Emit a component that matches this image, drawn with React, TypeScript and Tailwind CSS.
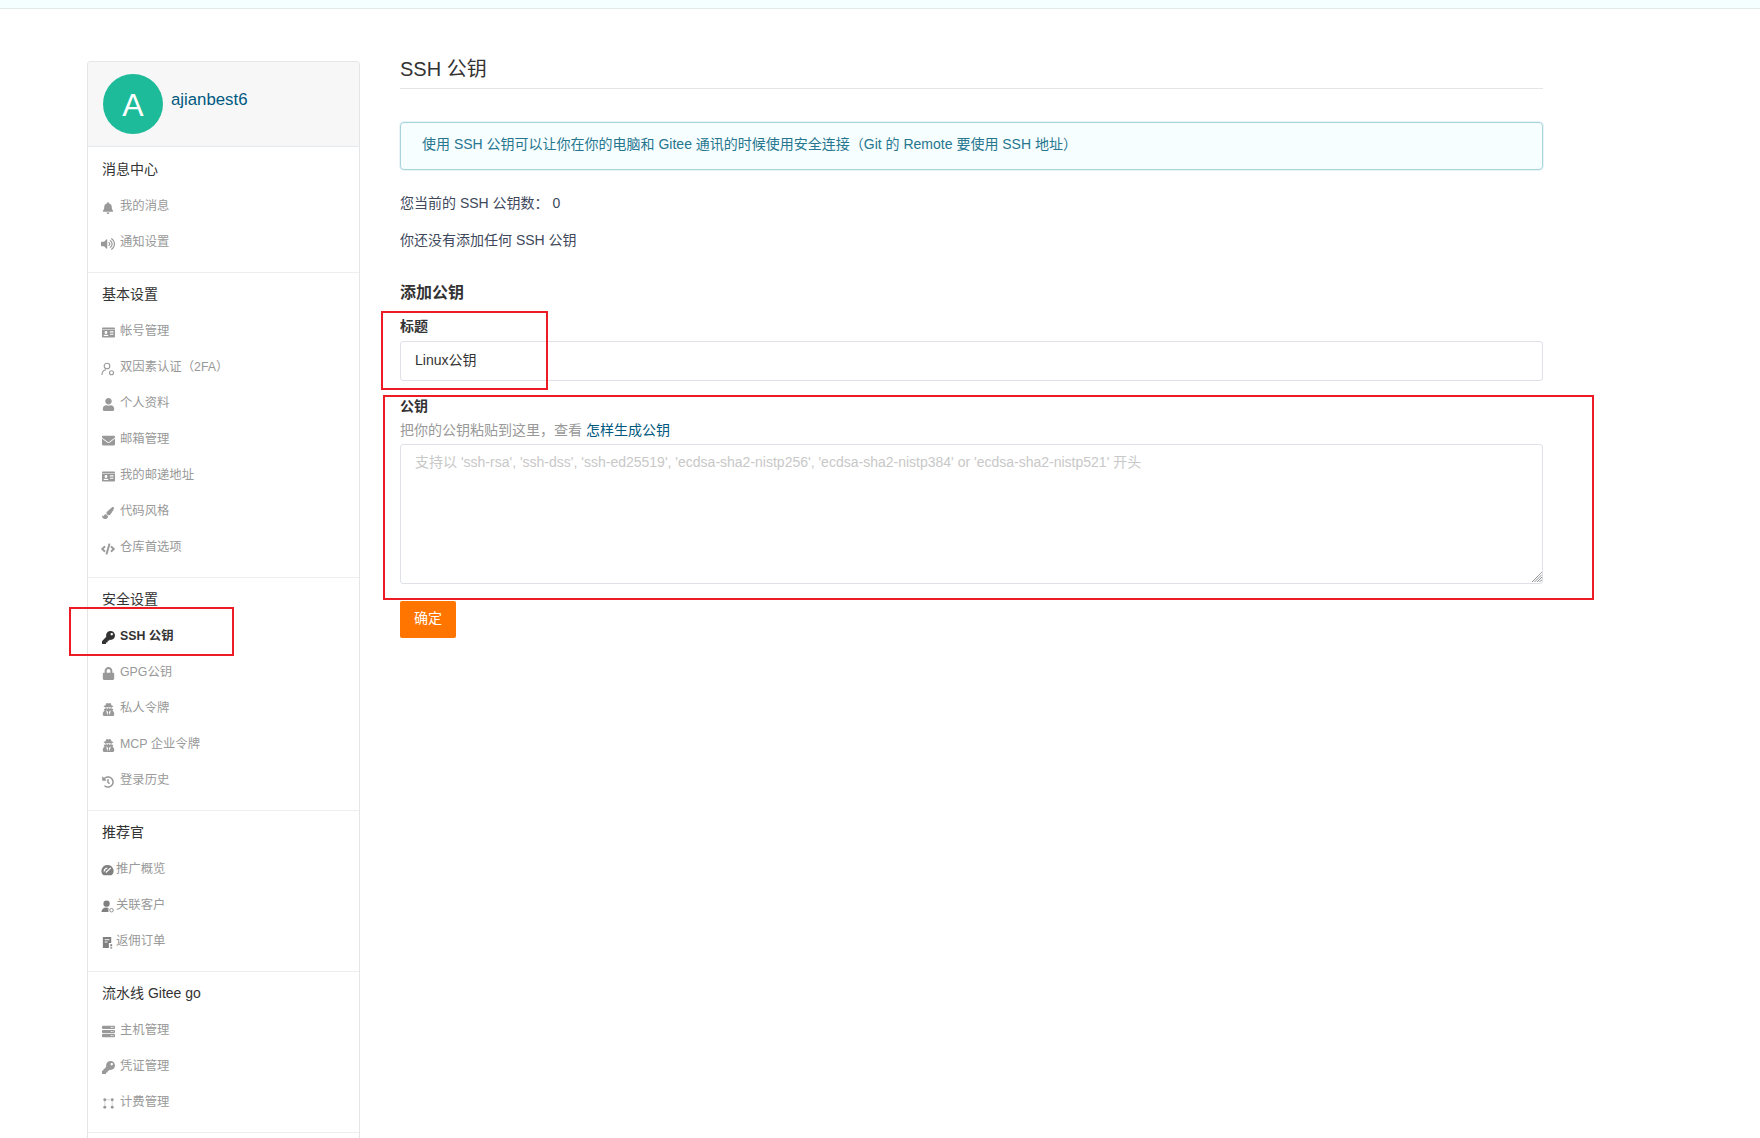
import type { ReactNode } from "react";
import {
  FaBell,
  FaCode,
  FaEnvelope,
  FaHistory,
  FaIdCard,
  FaKey,
  FaLock,
  FaPaintBrush,
  FaServer,
  FaUser,
  FaUserSecret,
  FaVolumeUp,
} from "react-icons/fa";

const font = "font-['Liberation_Sans','Noto_Sans_CJK_SC',sans-serif]";

function TwoFactor() {
  return (
    <svg viewBox="0 0 14 14" className="h-[14px] w-[14px]" fill="none" stroke="currentColor" strokeWidth="1.1">
      <circle cx="6" cy="4" r="2.8" />
      <path d="M1 13c0-3 1.6-5 4-5.3" />
      <circle cx="10.5" cy="10.8" r="2" />
    </svg>
  );
}

function Gauge() {
  return (
    <svg viewBox="0 0 14 14" className="h-[13px] w-[13px]" fill="currentColor">
      <path d="M7 1a6.5 6.5 0 0 0-5 10.7c.3.3.6.5 1 .5h8c.4 0 .7-.2 1-.5A6.5 6.5 0 0 0 7 1z" />
      <path d="M5.2 9.2L10.5 4.2M3.4 8a3.8 3.8 0 0 1 3.4-3.6" stroke="#fff" strokeWidth="1.3" fill="none" />
    </svg>
  );
}

function LinkedUser() {
  return (
    <svg viewBox="0 0 14 14" className="h-[13px] w-[13px]" fill="currentColor">
      <circle cx="6" cy="4" r="3.4" />
      <path d="M0.5 13c0-3.2 2.2-5 5-5 1 0 1.8.2 2.5.6V13z" />
      <circle cx="11.3" cy="11" r="1.9" fill="none" stroke="currentColor" strokeWidth="0.9" />
    </svg>
  );
}

function Receipt() {
  return (
    <svg viewBox="0 0 14 14" className="h-[13px] w-[13px]" fill="currentColor">
      <path d="M2 1h9v6.5H8.5V13H2z" />
      <path d="M4 4h5M4 6.5h3" stroke="#fff" strokeWidth="1" />
      <path d="M10 9h2v2h-2zM10 12h2v1.5h-2z" />
    </svg>
  );
}

function Billing() {
  return (
    <svg viewBox="0 0 14 14" className="h-[13px] w-[13px]" fill="currentColor">
      <circle cx="3" cy="3" r="1.6" />
      <circle cx="11" cy="3" r="1.6" />
      <circle cx="3" cy="11" r="1.6" />
      <circle cx="11" cy="11" r="1.6" />
      <path d="M3 4v6M11 4v6M5 3h4" stroke="currentColor" strokeWidth="0.8" strokeDasharray="1 1" />
    </svg>
  );
}

function ResizeGrip() {
  return (
    <svg viewBox="0 0 10 10" className="absolute bottom-[2px] right-[1px] h-[10px] w-[10px]" stroke="#666" strokeWidth="1" strokeDasharray="1 0.5">
      <path d="M0 10L10 0M2.5 10L10 2.5M5 10L10 5M7.5 10L10 7.5" />
    </svg>
  );
}

type Item = { icon: ReactNode; label: string; active?: boolean; tight?: boolean };
type Section = { title: string; items: Item[] };

const sections: Section[] = [
  {
    title: "消息中心",
    items: [
      { icon: <FaBell size={12} />, label: "我的消息" },
      { icon: <FaVolumeUp size={14} />, label: "通知设置" },
    ],
  },
  {
    title: "基本设置",
    items: [
      { icon: <FaIdCard size={13} />, label: "帐号管理" },
      { icon: <TwoFactor />, label: "双因素认证（2FA）" },
      { icon: <FaUser size={13} />, label: "个人资料" },
      { icon: <FaEnvelope size={13} />, label: "邮箱管理" },
      { icon: <FaIdCard size={13} />, label: "我的邮递地址" },
      { icon: <FaPaintBrush size={12} />, label: "代码风格" },
      { icon: <FaCode size={14} />, label: "仓库首选项" },
    ],
  },
  {
    title: "安全设置",
    items: [
      { icon: <FaKey size={13} />, label: "SSH 公钥", active: true },
      { icon: <FaLock size={13} />, label: "GPG公钥" },
      { icon: <FaUserSecret size={13} />, label: "私人令牌" },
      { icon: <FaUserSecret size={13} />, label: "MCP 企业令牌" },
      { icon: <FaHistory size={12} />, label: "登录历史" },
    ],
  },
  {
    title: "推荐官",
    items: [
      { icon: <Gauge />, label: "推广概览", tight: true },
      { icon: <LinkedUser />, label: "关联客户", tight: true },
      { icon: <Receipt />, label: "返佣订单", tight: true },
    ],
  },
  {
    title: "流水线 Gitee go",
    items: [
      { icon: <FaServer size={13} />, label: "主机管理" },
      { icon: <FaKey size={13} />, label: "凭证管理" },
      { icon: <Billing />, label: "计费管理" },
    ],
  },
];

function SideItem({ item }: { item: Item }) {
  const iconColor = item.active ? "text-[#333]" : item.tight ? "text-[#808080]" : "text-[#999]";
  return (
    <div className={`flex h-[36px] items-center pl-[13px] text-[12.35px] ${item.active ? "font-bold text-[#333]" : "text-[#999]"}`}>
      <span className={`mt-[3px] flex justify-center ${item.tight ? "w-[13px]" : "w-[14px]"} ${iconColor}`}>{item.icon}</span>
      <span className={item.tight ? "ml-[2px]" : "ml-[5px]"}>{item.label}</span>
    </div>
  );
}

function Sidebar() {
  return (
    <aside className="mt-[52px] h-[1077px] w-[273px] shrink-0 overflow-hidden rounded-t-[4px] border border-b-0 border-[#e3e5e8]">
      <div className="flex h-[85px] gap-[8px] border-b border-[#e3e9ed] bg-[#f7f7f7] pl-[15px] pt-[12px]">
        <div className="flex h-[60px] w-[60px] items-center justify-center rounded-full bg-[#1dbb99] pt-[2px] text-[32px] leading-none text-white">
          A
        </div>
        <a className="mt-[14px] text-[16.8px] leading-[24px] text-[#005980]">ajianbest6</a>
      </div>
      <div className="pt-[1px]">
        {sections.map((s) => (
          <div key={s.title} className="border-b border-[#eeeeee] pb-[12px] pt-[9px]">
            <div className="mb-[7px] h-[24px] pl-[14px] text-[14px] leading-[24px] text-[#333]">{s.title}</div>
            {s.items.map((item) => (
              <SideItem key={item.label} item={item} />
            ))}
          </div>
        ))}
      </div>
    </aside>
  );
}

export default function App() {
  return (
    <div className={`relative h-[1138px] overflow-hidden bg-white ${font}`}>
      <div className="h-[9px] border-b border-[#e0eaea] bg-[#f4ffff]" />
      <div className="flex pl-[87px]">
        <Sidebar />
        <main className="ml-[40px] w-[1143px] pt-[46px] text-[14px] text-[#40485b]">
          <h2 className="h-[34px] border-b border-[#e3e5e8] text-[20px] leading-[28px] text-[#333]">SSH 公钥</h2>
          <div className="mt-[33px] flex h-[48px] items-center rounded-[4px] border border-[#a8d4dd] bg-[#f6feff] pb-[3px] pl-[21px] text-[#26768f] shadow-[0_0_0_1px_rgba(168,212,221,0.25)]">
            使用 SSH 公钥可以让你在你的电脑和 Gitee 通讯的时候使用安全连接（Git 的 Remote 要使用 SSH 地址）
          </div>
          <p className="mt-[23px] leading-[20px]">您当前的 SSH 公钥数： 0</p>
          <p className="mt-[17px] leading-[20px]">你还没有添加任何 SSH 公钥</p>
          <h3 className="mt-[31px] text-[16px] font-bold leading-[24px] text-[#333]">添加公钥</h3>
          <label className="mt-[11px] block text-[14px] font-bold leading-[20px] text-[#333]">标题</label>
          <input
            readOnly
            value="Linux公钥"
            className="mt-[5px] block h-[40px] w-full rounded-[3px] border border-[#dfe1e8] pb-[4px] pl-[14px] text-[14px] text-[#333] outline-none"
          />
          <label className="mt-[15px] block text-[14px] font-bold leading-[20px] text-[#333]">公钥</label>
          <div className="mt-[4px] leading-[20px] text-[#999]">
            把你的公钥粘贴到这里，查看 <a className="text-[#005980]">怎样生成公钥</a>
          </div>
          <div className="relative mt-[4px]">
            <textarea
              readOnly
              placeholder="支持以 'ssh-rsa', 'ssh-dss', 'ssh-ed25519', 'ecdsa-sha2-nistp256', 'ecdsa-sha2-nistp384' or 'ecdsa-sha2-nistp521' 开头"
              className="block h-[140px] w-full resize-none rounded-[3px] border border-[#dfe1e8] px-[14px] pb-[8px] pt-[7px] text-[14px] leading-[20px] outline-none placeholder:text-[#c8c8c8]"
            />
            <ResizeGrip />
          </div>
          <button className="mt-[17px] h-[37px] w-[56px] rounded-[2px] bg-[#ff7500] pb-[2px] text-[14px] text-white">确定</button>
        </main>
      </div>
      {/* red annotation boxes on top of the screenshot */}
      <div className="absolute left-[69px] top-[607px] h-[49px] w-[165px] border-2 border-[#ed1c24]" />
      <div className="absolute left-[381px] top-[311px] h-[79px] w-[167px] border-2 border-[#ed1c24]" />
      <div className="absolute left-[383px] top-[395px] h-[205px] w-[1211px] border-2 border-[#ed1c24]" />
    </div>
  );
}
